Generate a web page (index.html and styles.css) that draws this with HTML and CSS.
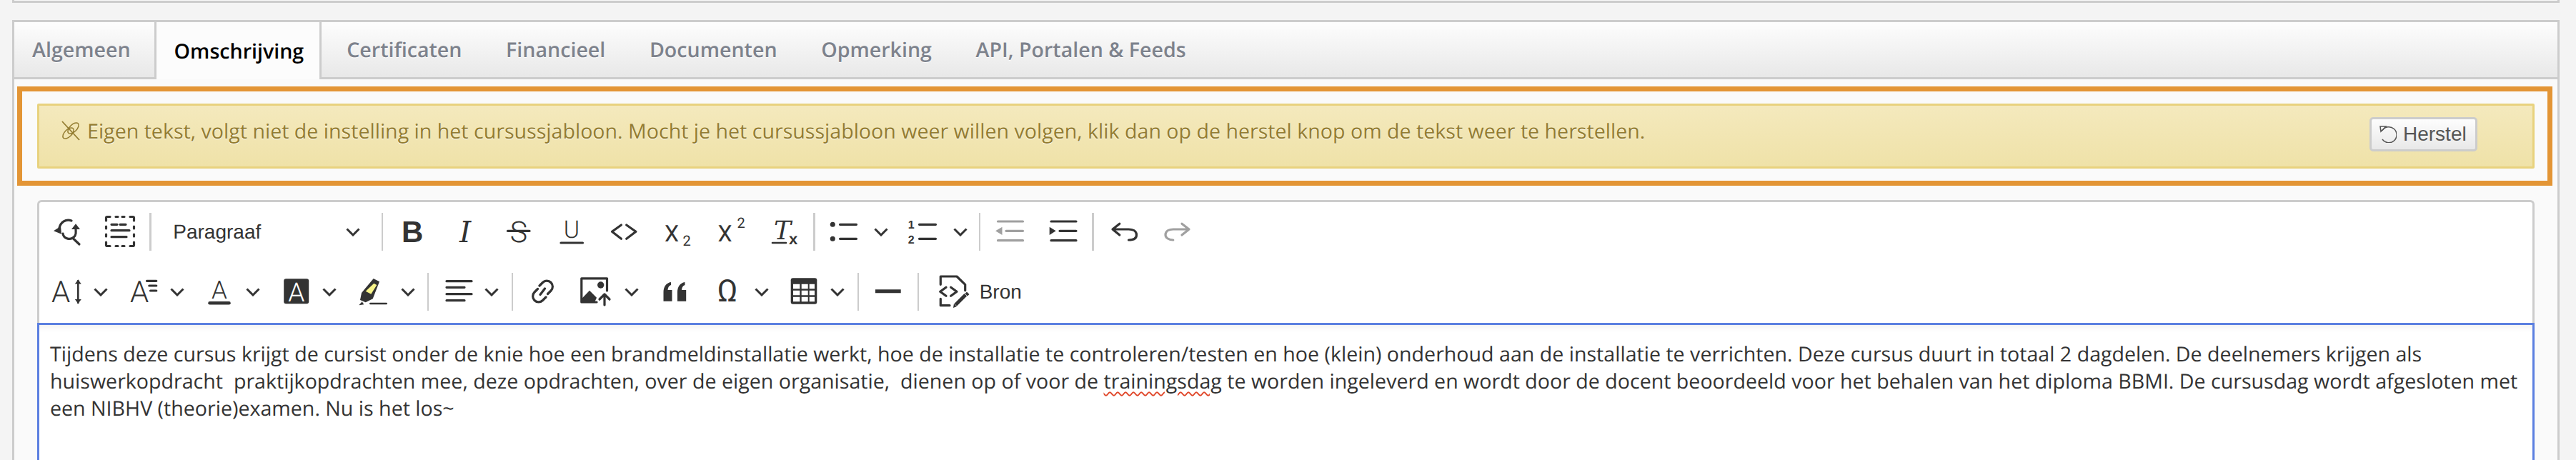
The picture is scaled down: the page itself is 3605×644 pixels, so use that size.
FILE: index.html
```html
<!DOCTYPE html>
<html lang="nl">
<head>
    <meta charset="UTF-8">
    <title>Cursus bewerken - Omschrijving</title>
    <link rel="stylesheet" href="styles.css">
</head>
<body>
    <svg class="sprite"><symbol id="chev" viewBox="0 0 20 12"><polyline points="1.5 1.5 10 10 18.5 1.5"/></symbol></svg>

    <div class="card card-top"></div>

    <div class="card">
        <div class="tabs">
            <a class="tab first">Algemeen</a>
            <a class="tab active">Omschrijving</a>
            <a class="tab after-active">Certificaten</a>
            <a class="tab">Financieel</a>
            <a class="tab">Documenten</a>
            <a class="tab">Opmerking</a>
            <a class="tab">API, Portalen &amp; Feeds</a>
        </div>

        <div class="highlight">
            <div class="alert">
                <div class="alert-text">
                    <svg class="alert-icon" viewBox="0 0 28 28">
                        <ellipse cx="10.500" cy="17.500" rx="5" ry="9.500" transform="rotate(45 10.500 17.500)"/>
                        <ellipse cx="17.500" cy="10.500" rx="5" ry="9.500" transform="rotate(45 17.500 10.500)"/>
                        <path class="alert-slash" d="M2 1l24 26"/>
                    </svg>
                    Eigen tekst, volgt niet de instelling in het cursussjabloon. Mocht je het cursussjabloon weer willen volgen, klik dan op de herstel knop om de tekst weer te herstellen.
                </div>
                <button class="btn-restore">
                    <svg viewBox="0 0 24 24"><path d="M4 6.500A11 11 0 1 1 4 19"/><path d="M1 1h8l-7 7z"/></svg>
                    Herstel
                </button>
            </div>
        </div>

        <div class="editor">
            <div class="toolbar">
                <div class="row">
                    <span class="tb"><svg viewBox="0 0 74 53"><path class="s" d="M43 11C35 8 28 13 26 21"/><path class="f" d="M18 25.300l10-6.600 1 11z"/><path class="s" d="M31 29c1 7 11 11 17 3 2-3 1-6 1-9"/><path class="f" d="M49 15.300l6 7.700H43z"/><path class="s" d="M45 35.500l9 8.500"/></svg></span>
                    <span class="tb"><svg viewBox="0 0 74 53"><path class="s" d="M17.500 11V7a1.500 1.500 0 0 1 1.500-1.500h4M51 5.500h4a1.500 1.500 0 0 1 1.500 1.500v4M56.500 41v4a1.500 1.500 0 0 1-1.500 1.500h-4M23 46.500h-4a1.500 1.500 0 0 1-1.500-1.500v-4M31 5.500h3M40 5.500h3M31 46.500h3M40 46.500h3M17.500 19v3M17.500 30v3M56.500 19v3M56.500 30v3M25 16.300h8M37 16.300h8M25 24.700h25M25 33.700h21"/></svg></span>
                    <span class="sep"></span>
                    <span class="tb-select">Paragraaf <svg class="chev"><use href="#chev"/></svg></span>
                    <span class="sep"></span>
                    <span class="tb"><svg viewBox="0 0 74 53"><text class="g-bold" x="22" y="41">B</text></svg></span>
                    <span class="tb"><svg viewBox="0 0 74 53"><text class="g-serif" x="37" y="41" text-anchor="middle">I</text></svg></span>
                    <span class="tb"><svg viewBox="0 0 74 53"><text class="g-light" x="37" y="41" text-anchor="middle">S</text><path class="s" d="M21.500 25.300h30.500"/></svg></span>
                    <span class="tb"><svg viewBox="0 0 74 53"><text class="g-light g-34" x="37" y="35.300" text-anchor="middle">U</text><path class="s" d="M22 42h30.500"/></svg></span>
                    <span class="tb"><svg viewBox="0 0 74 53"><path class="s" d="M32.400 17L19.500 26.300l12.900 10M39.700 17l13.200 9.300-13.200 10"/></svg></span>
                    <span class="tb"><svg viewBox="0 0 74 53"><text class="g-reg g-32" x="18" y="40.300">X</text><text class="g-reg g-20" x="43.500" y="46.300">2</text></svg></span>
                    <span class="tb"><svg viewBox="0 0 74 53"><text class="g-reg g-32" x="18.600" y="40.300">X</text><text class="g-reg g-20" x="45.500" y="21.300">2</text></svg></span>
                    <span class="tb"><svg viewBox="0 0 74 53"><text class="g-serif g-36" x="22" y="37">T</text><path class="s thin" d="M20 42h19"/><text class="g-bold g-22" x="43" y="44.400">x</text></svg></span>
                    <span class="sep"></span>
                    <span class="tb-split wide"><span class="tb"><svg viewBox="0 0 74 53"><circle class="f" cx="21.300" cy="16.300" r="3.500"/><circle class="f" cx="21.300" cy="36.300" r="3.500"/><path class="s" d="M31.500 16.300h23M31.500 36.300h23"/></svg></span><svg class="chev"><use href="#chev"/></svg></span>
                    <span class="tb-split wide"><span class="tb"><svg viewBox="0 0 74 53"><text class="g-bold g-16" x="20.300" y="22" text-anchor="middle">1</text><text class="g-bold g-16" x="20.300" y="43" text-anchor="middle">2</text><path class="s" d="M31.500 16.300h23M31.500 36.300h23"/></svg></span><svg class="chev"><use href="#chev"/></svg></span>
                    <span class="sep"></span>
                    <span class="tb off"><svg viewBox="0 0 74 53"><path class="s" d="M20.500 12h35M32 25.300h23.500M20.500 38.700h35"/><path class="f" d="M17.100 25.300l9.400-5.600v11.300z"/></svg></span>
                    <span class="tb"><svg viewBox="0 0 74 53"><path class="s" d="M21 12h35M33 25.300h23M21 38.700h35"/><path class="f" d="M18.700 19.700v11.300l9-5.700z"/></svg></span>
                    <span class="sep"></span>
                    <span class="tb"><svg viewBox="0 0 74 53"><path class="s" d="M32.800 15.300L23 23l9.800 8M23 23h22.500c5 0 11 2 11 8s-6 7-11 7"/></svg></span>
                    <span class="tb off"><svg viewBox="0 0 74 53"><path class="s" d="M45 15.300L55 23l-10 8M55 23H33c-5 0-11 2-11 8 0 4 5 7 10.800 7"/></svg></span>
                </div>

                <div class="row">
                    <span class="tb-split"><span class="tb"><svg viewBox="0 0 74 53"><text class="g-light g-42" x="15" y="41.300">A</text><path class="s thin" d="M52.300 11v31"/><path class="f" d="M52.300 9.500l4.500 6h-9zM52.300 43l4.500-6h-9z"/></svg></span><svg class="chev"><use href="#chev"/></svg></span>
                    <span class="tb-split"><span class="tb"><svg viewBox="0 0 74 53"><text class="g-light g-42" x="18" y="41.300">A</text><path class="s" d="M41.500 11.300h13.300M44.800 18h10M46.500 25h8.300"/></svg></span><svg class="chev"><use href="#chev"/></svg></span>
                    <span class="tb-split"><span class="tb"><svg viewBox="0 0 74 53"><text class="g-light g-35" x="37" y="36.300" text-anchor="middle">A</text><path class="s bar" d="M23.500 42.300h27"/></svg></span><svg class="chev"><use href="#chev"/></svg></span>
                    <span class="tb-split"><span class="tb"><svg viewBox="0 0 74 53"><rect class="f" x="20.200" y="8.300" width="35" height="35" rx="3"/><text class="g-light g-37 white" x="37.700" y="40" text-anchor="middle">A</text></svg></span><svg class="chev"><use href="#chev"/></svg></span>
                    <span class="tb-split wide"><span class="tb"><svg viewBox="0 0 74 53"><path class="f" d="M39.700 8l8.300 4.300-9.300 24-10 5-7.700-3.300 2-10z"/><path class="yellow" d="M40.300 14.700l4 2.300-8 12.700-7.600-4z"/><path class="f" d="M19.300 45.300l4.400-5 2.600 4z"/><path class="s thin" d="M35.300 43h22.400"/></svg></span><svg class="chev"><use href="#chev"/></svg></span>
                    <span class="sep"></span>
                    <span class="tb-split align"><span class="tb"><svg viewBox="0 0 74 53"><path class="s" d="M21 11.700h35M21 20.300h25M21 29.700h35M21 38.700h25"/></svg></span><svg class="chev"><use href="#chev"/></svg></span>
                    <span class="sep"></span>
                    <span class="tb"><svg viewBox="0 0 74 53"><path class="s" d="M33 18l4.500-4.500a8.100 8.100 0 0 1 11.500 11.500l-4.500 4.500M42 34l-4.500 4.500a8.100 8.100 0 0 1-11.500-11.500l4.500-4.500M34 30.500l6.500-8.500"/></svg></span>
                    <span class="tb-split wide"><span class="tb"><svg viewBox="0 0 74 53"><path class="s" d="M39 41H17.800V7.800h35.700V25"/><circle class="f" cx="44.700" cy="17" r="4.700"/><path class="f" d="M18 42v-5.700l11-11.600 10 10-3.300 7.300z"/><path class="halo" d="M50 45V30"/><path class="s" d="M50 45V31M43 37l7-7 7 7"/></svg></span><svg class="chev"><use href="#chev"/></svg></span>
                    <span class="tb"><svg viewBox="0 0 74 53"><path class="f" d="M21.500 39.700V27c0-7 3.500-13 10.500-14v4c-3 1-4 3-4.500 7h6v15.700zM41 39.700V27c0-7 3.500-13 10.500-14v4c-3 1-4 3-4.500 7h6.200v15.700z"/></svg></span>
                    <span class="tb-split"><span class="tb"><svg viewBox="0 0 74 53"><text class="g-reg g-43" x="37" y="40" text-anchor="middle">&#937;</text></svg></span><svg class="chev"><use href="#chev"/></svg></span>
                    <span class="tb-split align"><span class="tb"><svg viewBox="0 0 74 53"><rect class="f" x="18.700" y="7.300" width="36.600" height="36.400" rx="3"/><path class="cells" d="M22 15.700h9.300v6.600H22zM33.700 15.700h9v6.600h-9zM44.700 15.700H52v6.600h-7.300zM22 24.700h9.300v6.600H22zM33.700 24.700h9v6.600h-9zM44.700 24.700H52v6.600h-7.300zM22 33.700h9.300v6.600H22zM33.700 33.700h9v6.600h-9zM44.700 33.700H52v6.600h-7.300z"/></svg></span><svg class="chev"><use href="#chev"/></svg></span>
                    <span class="sep"></span>
                    <span class="tb"><svg viewBox="0 0 74 53"><path class="s hr" d="M19 25.700h35.700"/></svg></span>
                    <span class="sep"></span>
                    <span class="tb-source">
                        <svg viewBox="0 0 74 53"><path class="s" d="M26.300 16.300V5H49l11.700 11.300v8.400M26.300 36.300v9.400H39M34 20.300l-8.300 6 8.300 6M40.700 20.300l8.300 6-8.300 6"/><path class="s hr" d="M47.300 44.700l14-14"/><path class="f" d="M44 49l1-6 4 4zM63 26.500l3.500 3.500-2.500 2.500-3.500-3.500z"/></svg>
                        Bron
                    </span>
                </div>
            </div>

            <div class="content">
                Tijdens deze cursus krijgt de cursist onder de knie hoe een brandmeldinstallatie werkt, hoe de installatie te controleren/testen en hoe (klein) onderhoud aan de installatie te verrichten. Deze cursus duurt in totaal 2 dagdelen. De deelnemers krijgen als huiswerkopdracht&nbsp; praktijkopdrachten mee, deze opdrachten, over de eigen organisatie,&nbsp; dienen op of voor de <span class="spell">trainingsdag</span> te worden ingeleverd en wordt door de docent beoordeeld voor het behalen van het diploma BBMI. De cursusdag wordt afgesloten met een NIBHV (theorie)examen. Nu is het los~
            </div>
        </div>
    </div>
</body>
</html>
```

FILE: styles.css
```css
* {
    margin: 0;
    padding: 0;
    box-sizing: border-box;
}

html, body {
    height: 644px;
    overflow: hidden;
}

body {
    background: #f4f4f4;
    font-family: "Open Sans", sans-serif;
    font-size: 28.600px;
    color: #333;
    text-rendering: geometricPrecision;
}

.sprite {
    display: none;
}

.card {
    margin: 24px 23px 0 17px;
    height: 700px;
    background: #fafafa;
    border: 3px solid #ccc;
}

.card-top {
    margin-top: 0;
    height: 4px;
    border-width: 0 3px 3px;
}

/* tabs */
.tabs {
    display: flex;
    height: 80px;
    background: linear-gradient(#fdfdfd, #e8e8e8);
    border-bottom: 3px solid #ccc;
}

.tab {
    display: flex;
    align-items: center;
    padding: 0 30.800px;
    color: #7d828c;
    font-weight: 600;
    text-shadow: 0 1px 0 #fff;
}

.tab.first {
    padding: 0 33px 0 25px;
}

.tab.active {
    height: 80px;
    padding: 0 22px 0 25px;
    color: #000;
    background: #fcfcfc;
    border: solid #ccc;
    border-width: 0 3px;
}

.tab.after-active {
    padding-left: 35px;
}

/* orange annotation round the notice */
.highlight {
    margin: 10px 7px 0 4px;
    height: 139px;
    padding: 17px 18px 17px 21px;
    border: 7px solid #e39535;
}

.alert {
    display: flex;
    justify-content: space-between;
    height: 91px;
    padding: 16px 77px 0 30px;
    background: linear-gradient(#f4e9bd, #efe2a8);
    border: 3px solid #e8d27e;
    border-radius: 2px;
    color: #937c30;
    text-shadow: 0 1px 0 #fff;
}

.alert-text {
    display: flex;
    gap: 9px;
    height: 38px;
    align-items: center;
    white-space: nowrap;
}

.alert-icon {
    width: 28px;
    height: 28px;
    fill: none;
    stroke: #937c30;
    stroke-width: 1.500;
}

.alert-slash {
    stroke: #937c30;
    stroke-width: 1.800;
}

.btn-restore {
    display: flex;
    align-items: center;
    gap: 9px;
    height: 48px;
    width: 151px;
    padding-left: 11px;
    background: linear-gradient(#fdfdfd, #e8e8e8);
    border: 3px solid #ccc;
    border-radius: 5px;
    color: #555;
    font-family: "Liberation Sans", sans-serif;
    font-size: 28px;
}

.btn-restore svg {
    width: 24px;
    height: 24px;
    fill: none;
    stroke: #555;
    stroke-width: 1.600;
    flex: none;
}

.btn-restore svg path + path {
    fill: #fff;
}

/* editor */
.editor {
    margin: 20px 32px 0 32px;
}

.toolbar {
    height: 172px;
    padding: 15px 0 0 2px;
    background: #fff;
    border: solid #ccc;
    border-width: 3px 3px 0;
    border-radius: 6px 6px 0 0;
    font-family: "Liberation Sans", sans-serif;
    font-size: 28px;
}

.row {
    display: flex;
    height: 53px;
    margin-bottom: 31px;
    align-items: center;
}

.sep {
    flex: none;
    width: 2.500px;
    height: 53px;
    margin: 0 3.500px;
    background: #ccc;
}

.tb {
    flex: none;
    width: 74.400px;
    height: 53px;
}

.tb svg, .tb-source svg {
    display: block;
    flex: none;
    width: 74px;
    height: 53px;
}

.tb-select {
    display: flex;
    flex: none;
    align-items: center;
    justify-content: space-between;
    width: 315px;
    padding: 0 26px 0 27px;
}

.tb-split {
    display: flex;
    flex: none;
    align-items: center;
    width: 106.500px;
}

.tb-split.wide {
    width: 111px;
}

.tb-split.align {
    width: 108.500px;
}

.chev {
    flex: none;
    width: 20px;
    height: 12px;
    fill: none;
    stroke: #333;
    stroke-width: 3;
}

.tb-split.wide .chev {
    margin-left: 4px;
}

.tb-source {
    display: flex;
    align-items: center;
    gap: 7px;
}

/* icon parts */
.s {
    fill: none;
    stroke: #333;
    stroke-width: 3.200;
    stroke-linecap: round;
    stroke-linejoin: round;
}

.s.thin {
    stroke-width: 2.600;
}

.s.bar {
    stroke-width: 4.500;
}

.s.hr {
    stroke-width: 5;
    stroke-linecap: butt;
}

.f {
    fill: #333;
}

.yellow {
    fill: #f8f48a;
}

.cells {
    fill: #fff;
}

.halo {
    fill: none;
    stroke: #fff;
    stroke-width: 12;
}

.off .s {
    stroke: #a0a0a0;
}

.off .f {
    fill: #a0a0a0;
}

.g-bold {
    font: 700 42px "Liberation Sans", sans-serif;
    fill: #333;
}

.g-serif {
    font: italic 400 41px "DejaVu Serif", serif;
    fill: #333;
}

.g-light {
    font: 300 41px Roboto, sans-serif;
    fill: #333;
}

.g-reg {
    font: 400 30px Roboto, sans-serif;
    fill: #333;
}

.g-bold.g-22 { font-size: 22px; }
.g-bold.g-16 { font-size: 16px; }
.g-serif.g-36 { font-size: 36px; }
.g-light.g-34 { font-size: 34px; }
.g-light.g-35 { font-size: 35px; }
.g-light.g-37 { font-size: 37px; }
.g-light.g-42 { font-size: 42px; }
.g-reg.g-32 { font-size: 32px; }
.g-reg.g-20 { font-size: 20px; }
.g-reg.g-43 { font-size: 43px; }

.g-light.white {
    fill: #fff;
}

.content {
    height: 400px;
    padding: 22px 18px 0 15px;
    background: #fff;
    border: 3px solid #5b7fe0;
    border-width: 3px 3px 0;
    box-shadow: inset 0 10px 10px -8px rgba(0,0,0,0.08);
    line-height: 38px;
}

.spell {
    text-decoration: underline wavy #e0472a 2px;
    text-underline-offset: 4px;
}
```
